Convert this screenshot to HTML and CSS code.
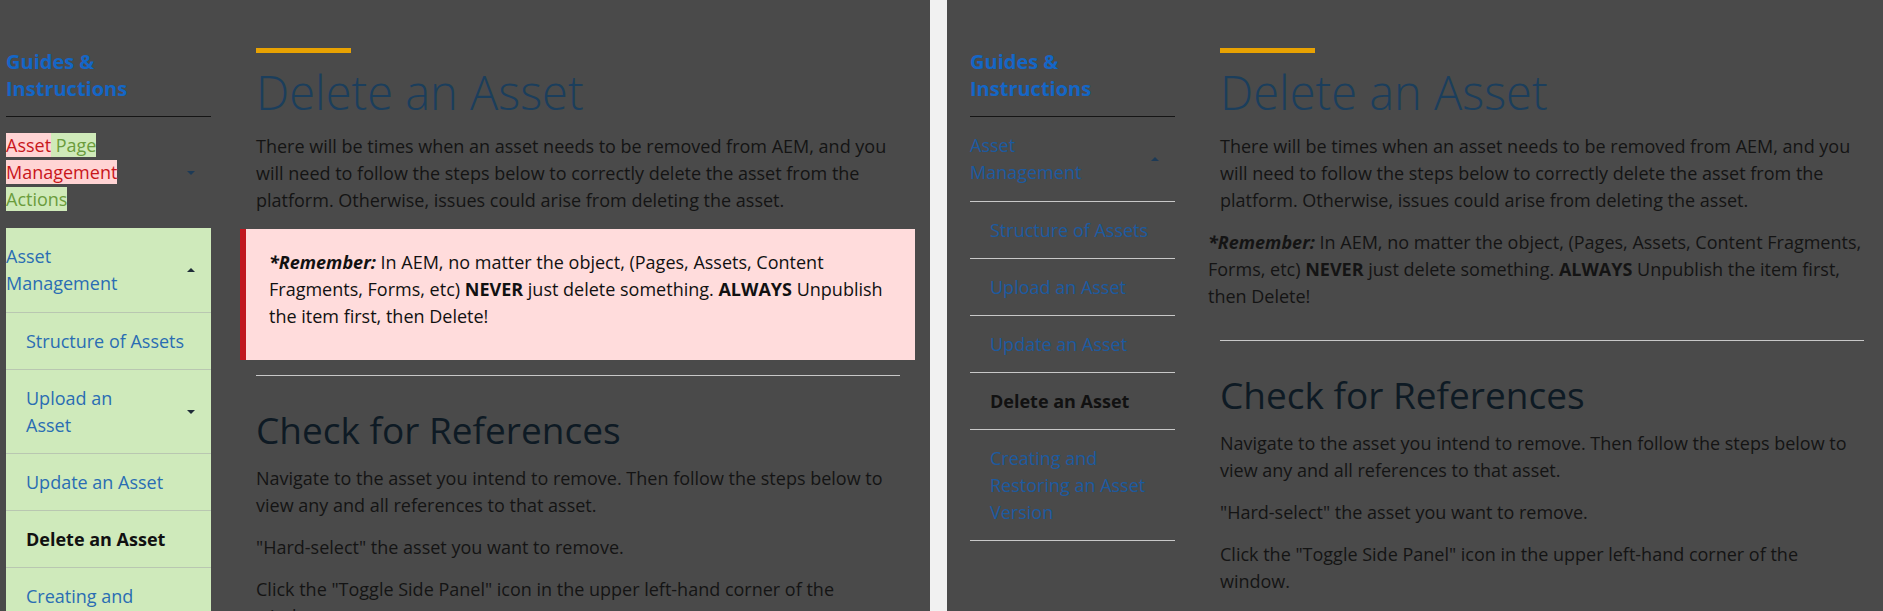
FILE: index.html
```html
<!DOCTYPE html>
<html lang="en">
<head>
<meta charset="utf-8">
<title>Delete an Asset</title>
<link rel="stylesheet" href="styles.css">
</head>
<body>
<div class="screens">
  <section class="panel panel-left">
    <aside class="sidebar">
      <h2 class="side-title">Guides &amp; Instructions</h2>
      <ul class="nav">
        <li class="top-item">
          <div class="nav-row">
            <span class="nav-text"><span class="del">Asset</span><span class="ins"> Page</span> <span class="del">Management</span> <span class="ins">Actions</span></span>
            <span class="caret-box caret-dim"><span class="caret caret-down"></span></span>
          </div>
        </li>
        <li class="top-item inserted">
          <div class="nav-row">
            <a class="nav-text nav-link">Asset Management</a>
            <span class="caret-box caret-dark"><span class="caret caret-up"></span></span>
          </div>
          <ul class="subnav">
            <li class="sub-item"><a class="nav-link">Structure of Assets</a></li>
            <li class="sub-item has-caret">
              <div class="nav-row">
                <a class="nav-text nav-link">Upload an Asset</a>
                <span class="caret-box caret-dark"><span class="caret caret-down"></span></span>
              </div>
            </li>
            <li class="sub-item"><a class="nav-link">Update an Asset</a></li>
            <li class="sub-item active">Delete an Asset</li>
            <li class="sub-item"><a class="nav-link">Creating and Restoring an Asset Version</a></li>
          </ul>
        </li>
      </ul>
    </aside>
    <main class="content">
      <div class="accent-bar"></div>
      <h1>Delete an Asset</h1>
      <p>There will be times when an asset needs to be removed from AEM, and you will need to follow the steps below to correctly delete the asset from the platform. Otherwise, issues could arise from deleting the asset.</p>
      <div class="callout callout-diff">
        <p><b><i>*Remember:</i></b> In AEM, no matter the object, (Pages, Assets, Content Fragments, Forms, etc) <b>NEVER</b> just delete something. <b>ALWAYS</b> Unpublish the item first, then Delete!</p>
      </div>
      <hr>
      <h2>Check for References</h2>
      <p>Navigate to the asset you intend to remove. Then follow the steps below to view any and all references to that asset.</p>
      <p>"Hard-select" the asset you want to remove.</p>
      <p>Click the "Toggle Side Panel" icon in the upper left-hand corner of the window.</p>
    </main>
  </section>

  <div class="divider"></div>

  <section class="panel panel-right">
    <aside class="sidebar">
      <h2 class="side-title">Guides &amp; Instructions</h2>
      <ul class="nav">
        <li class="top-item plain">
          <div class="nav-row">
            <a class="nav-text nav-link">Asset Management</a>
            <span class="caret-box caret-dim"><span class="caret caret-up"></span></span>
          </div>
          <ul class="subnav subnav-plain">
            <li class="sub-item"><a class="nav-link">Structure of Assets</a></li>
            <li class="sub-item"><a class="nav-link">Upload an Asset</a></li>
            <li class="sub-item"><a class="nav-link">Update an Asset</a></li>
            <li class="sub-item active">Delete an Asset</li>
            <li class="sub-item"><a class="nav-link">Creating and Restoring an Asset Version</a></li>
          </ul>
        </li>
      </ul>
    </aside>
    <main class="content">
      <div class="accent-bar"></div>
      <h1>Delete an Asset</h1>
      <p>There will be times when an asset needs to be removed from AEM, and you will need to follow the steps below to correctly delete the asset from the platform. Otherwise, issues could arise from deleting the asset.</p>
      <div class="callout callout-plain">
        <p><b><i>*Remember:</i></b> In AEM, no matter the object, (Pages, Assets, Content Fragments, Forms, etc) <b>NEVER</b> just delete something. <b>ALWAYS</b> Unpublish the item first, then Delete!</p>
      </div>
      <hr>
      <h2>Check for References</h2>
      <p>Navigate to the asset you intend to remove. Then follow the steps below to view any and all references to that asset.</p>
      <p>"Hard-select" the asset you want to remove.</p>
      <p>Click the "Toggle Side Panel" icon in the upper left-hand corner of the window.</p>
    </main>
  </section>
</div>
</body>
</html>
```
FILE: styles.css
```css
html, body {
  margin: 0;
  height: 100%;
  overflow: hidden;
}

body {
  font-family: "Open Sans", "Noto Sans", sans-serif;
  font-size: 18px;
  line-height: 27px;
  color: #141414;
  background: #4a4a4a;
}

.screens {
  display: flex;
  height: 611px;
}

.panel {
  display: flex;
  gap: 45px;
  padding-top: 48px;
  box-sizing: border-box;
  background: #4a4a4a;
}

.panel-left {
  width: 930px;
  flex: none;
  padding-left: 6px;
}

.divider {
  width: 17px;
  flex: none;
  background: #f1f1f1;
}

.panel-right {
  flex: 1;
  padding-left: 23px;
}

/* ---------- sidebar ---------- */
.sidebar {
  width: 205px;
  flex: none;
}

.side-title {
  margin: 0;
  padding-bottom: 14px;
  border-bottom: 1px solid #151515;
  font-size: 20px;
  font-weight: 700;
  line-height: 27px;
  color: #1466c6;
}

.nav,
.subnav {
  list-style: none;
  margin: 0;
  padding: 0;
}

.top-item > .nav-row {
  padding: 15px 0;
}

.nav-row {
  display: flex;
  align-items: center;
}

.nav-text {
  flex: 1;
  min-width: 0;
}

.caret-box {
  width: 60px;
  flex: none;
  display: flex;
  justify-content: flex-end;
  padding-right: 16px;
  box-sizing: border-box;
}

.caret-dim { color: #1d3a56; }
.caret-dark { color: #1f2c38; }

.caret {
  width: 0;
  height: 0;
  border-left: 4px solid transparent;
  border-right: 4px solid transparent;
}

.caret-down { border-top: 4px solid currentColor; }
.caret-up { border-bottom: 4px solid currentColor; }

.del {
  background: #ffd4d4;
  color: #c8161b;
}

.ins {
  background: #cfeab9;
  color: #6b9c3c;
}

.inserted {
  background: #cfeabb;
}

.inserted .nav-link {
  color: #2a6db3;
}

.sub-item {
  padding: 15px 10px 14px 20px;
  border-top: 1px solid #b9c7b1;
}

.sub-item.has-caret {
  padding-right: 0;
}

.subnav-plain .sub-item {
  border-top-color: #c8c8c8;
}

.subnav-plain {
  border-bottom: 1px solid #c8c8c8;
}

.plain .nav-link {
  color: #1c5aa0;
}

.sub-item.active {
  font-weight: 700;
  color: #111;
}

/* ---------- content ---------- */
.content {
  width: 644px;
  flex: none;
}

.accent-bar {
  width: 95px;
  height: 5px;
  background: #e8a202;
}

h1 {
  margin: 12px 0 14px;
  font-size: 47px;
  font-weight: 300;
  line-height: 54px;
  color: #1b3e5c;
}

p {
  margin: 0 0 15px;
}

.callout-diff {
  margin: 0 -15px 15px -16px;
  padding: 20px 23px 15px;
  background: #ffdcdc;
  border-left: 6px solid #c0171f;
  color: #111;
}

.callout-plain {
  margin: 0 -2px 15px -12px;
  padding-bottom: 15px;
}

.callout-plain p {
  margin-bottom: 0;
}

hr {
  margin: 0;
  border: 0;
  border-top: 1px solid #c8c8c8;
}

h2 {
  margin: 34px 0 15px;
  font-size: 37px;
  font-weight: 400;
  line-height: 40px;
  color: #0e1a24;
}
```
